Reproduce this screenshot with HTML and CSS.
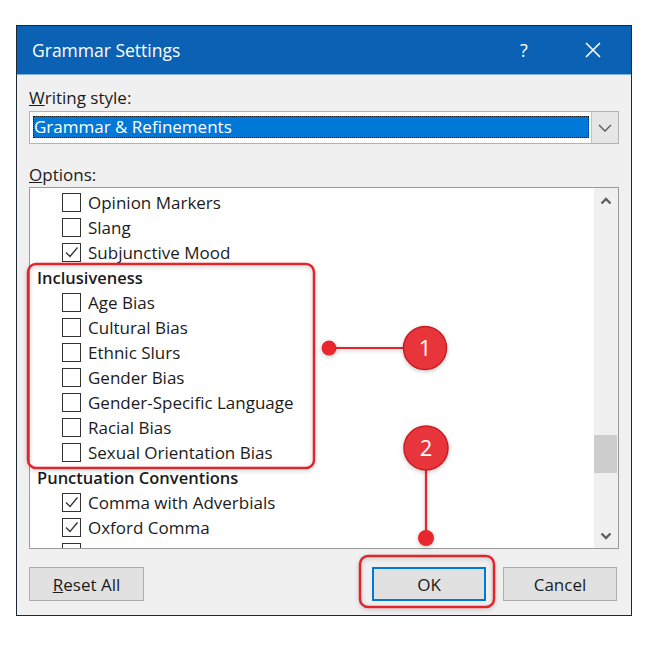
FILE: index.html
```html
<!DOCTYPE html>
<html>
<head>
<meta charset="utf-8">
<link rel="stylesheet" href="styles.css">
</head>
<body>
<div class="dialog">
  <div class="titlebar">
    <span class="title">Grammar Settings</span>
    <span class="help">?</span>
    <span class="close"><svg width="18" height="18" viewBox="0 0 18 18"><path d="M2 2 L16 16 M16 2 L2 16" stroke="#fff" stroke-width="1.6" fill="none"/></svg></span>
  </div>
  <div class="content">
    <div class="label"><u>W</u>riting style:</div>
    <div class="combo">
      <div class="combo-field"><span class="combo-sel">Grammar &amp; Refinements</span></div>
      <div class="combo-btn"><svg width="14" height="8" viewBox="0 0 14 8"><path d="M1 1 L7 7 L13 1" stroke="#5a5a5a" stroke-width="1.4" fill="none"/></svg></div>
    </div>
    <div class="label options-label"><u>O</u>ptions:</div>
    <div class="listbox">
      <div class="items">
        <div class="row"><span class="cb"></span>Opinion Markers</div>
        <div class="row"><span class="cb"></span>Slang</div>
        <div class="row"><span class="cb checked"><svg viewBox="0 0 17 17"><path d="M3 8.5 L7 12.5 L14.5 3.5" stroke="#333" stroke-width="1.3" fill="none"/></svg></span>Subjunctive Mood</div>
        <div class="row head">Inclusiveness</div>
        <div class="row"><span class="cb"></span>Age Bias</div>
        <div class="row"><span class="cb"></span>Cultural Bias</div>
        <div class="row"><span class="cb"></span>Ethnic Slurs</div>
        <div class="row"><span class="cb"></span>Gender Bias</div>
        <div class="row"><span class="cb"></span>Gender-Specific Language</div>
        <div class="row"><span class="cb"></span>Racial Bias</div>
        <div class="row"><span class="cb"></span>Sexual Orientation Bias</div>
        <div class="row head">Punctuation Conventions</div>
        <div class="row"><span class="cb checked"><svg viewBox="0 0 17 17"><path d="M3 8.5 L7 12.5 L14.5 3.5" stroke="#333" stroke-width="1.3" fill="none"/></svg></span>Comma with Adverbials</div>
        <div class="row"><span class="cb checked"><svg viewBox="0 0 17 17"><path d="M3 8.5 L7 12.5 L14.5 3.5" stroke="#333" stroke-width="1.3" fill="none"/></svg></span>Oxford Comma</div>
        <div class="row"><span class="cb"></span></div>
      </div>
      <div class="scrollbar">
        <div class="sb-arrow"><svg width="12" height="8" viewBox="0 0 12 8"><path d="M1.5 6.5 L6 2 L10.5 6.5" stroke="#606060" stroke-width="2.4" fill="none"/></svg></div>
        <div class="sb-track"><div class="sb-thumb"></div></div>
        <div class="sb-arrow"><svg width="12" height="8" viewBox="0 0 12 8"><path d="M1.5 1.5 L6 6 L10.5 1.5" stroke="#606060" stroke-width="2.4" fill="none"/></svg></div>
      </div>
    </div>
    <div class="buttons">
      <div class="btn"><u>R</u>eset All</div>
      <div class="spacer"></div>
      <div class="btn btn-default">OK</div>
      <div class="btn">Cancel</div>
    </div>
  </div>
</div>
<svg class="annotations" width="656" height="658" viewBox="0 0 656 658">
  <defs>
    <filter id="sh" x="-20%" y="-20%" width="140%" height="140%">
      <feDropShadow dx="0" dy="1.5" stdDeviation="2" flood-color="#000" flood-opacity="0.22"/>
    </filter>
  </defs>
  <g filter="url(#sh)" fill="none" stroke="#e0262c" stroke-width="2.5">
    <rect x="28" y="264" width="286" height="204" rx="8"/>
    <rect x="360" y="556" width="134" height="51" rx="8"/>
    <line x1="329" y1="348" x2="404" y2="348" stroke-width="2.2"/>
    <line x1="426" y1="468" x2="426" y2="538" stroke-width="2.2"/>
  </g>
  <g filter="url(#sh)">
    <circle cx="329" cy="348" r="7.5" fill="#e8262d"/>
    <circle cx="426" cy="538" r="8" fill="#e8262d"/>
    <circle cx="425" cy="348" r="21.5" fill="#e8353b" stroke="#c81e24" stroke-width="1.5"/>
    <circle cx="426" cy="448" r="22" fill="#e8353b" stroke="#c81e24" stroke-width="1.5"/>
  </g>
  <text x="425" y="356" class="num">1</text>
  <text x="426" y="456" class="num">2</text>
</svg>
</body>
</html>
```

FILE: styles.css
```css
html, body {
  margin: 0;
  padding: 0;
  background: #ffffff;
}
body {
  width: 656px;
  height: 658px;
  position: relative;
  font-family: "Open Sans", "Noto Sans", sans-serif;
  color: #1b1b1b;
}
.dialog {
  margin: 25px 0 0 16px;
  width: 616px;
  box-sizing: border-box;
  border: 1px solid #1d2730;
  background: #f0f0f0;
}
.titlebar {
  height: 49px;
  background: #0b62b4;
  display: flex;
  align-items: center;
  color: #ffffff;
  border-bottom: 1px solid #7fb0e0;
  box-sizing: border-box;
}
.title {
  font-size: 17.5px;
  padding-left: 15px;
  flex: 1;
  padding-bottom: 1px;
}
.help {
  font-size: 18px;
  width: 20px;
  text-align: center;
  margin-right: 50px;
}
.close {
  display: flex;
  margin-right: 29px;
}
.content {
  padding: 12px 12px 14px 12px;
}
.label {
  font-size: 17px;
  line-height: 22px;
  padding-left: 0;
}
.options-label {
  margin-top: 20px;
}
.combo {
  margin-top: 2px;
  height: 33px;
  box-sizing: border-box;
  border: 1px solid #b4b4b4;
  background: #ffffff;
  display: flex;
}
.combo-field {
  flex: 1;
  padding: 4px 2px 5px 3px;
  display: flex;
}
.combo-sel {
  flex: 1;
  background: #0078d7;
  color: #ffffff;
  font-size: 17px;
  line-height: 19px;
  padding-left: 0;
  border: 1px dotted #1a1a1a;
}
.combo-btn {
  width: 26px;
  background: #e6e6e6;
  border-left: 1px solid #c4c4c4;
  display: flex;
  align-items: center;
  justify-content: center;
}
.listbox {
  margin-top: 1px;
  height: 362px;
  box-sizing: border-box;
  border: 1px solid #9a9a9a;
  background: #ffffff;
  display: flex;
  overflow: hidden;
}
.items {
  flex: 1;
  padding-top: 2px;
  overflow: hidden;
}
.row {
  height: 25px;
  line-height: 25px;
  font-size: 17px;
  display: flex;
  align-items: center;
  padding-left: 32px;
  white-space: nowrap;
}
.row.head {
  padding-left: 7px;
  font-weight: 600;
  font-size: 16.5px;
}
.cb {
  width: 19px;
  height: 19px;
  box-sizing: border-box;
  border: 1px solid #333333;
  background: #ffffff;
  margin-right: 7px;
  margin-top: -1px;
  flex: none;
  display: flex;
}
.cb svg {
  width: 17px;
  height: 17px;
}
.scrollbar {
  width: 24px;
  background: #f0f0f0;
  display: flex;
  flex-direction: column;
}
.sb-arrow {
  height: 25px;
  display: flex;
  align-items: center;
  justify-content: center;
}
.sb-track {
  flex: 1;
}
.sb-thumb {
  margin-top: 222px;
  height: 38px;
  margin-right: 1px;
  background: #cdcdcd;
}
.buttons {
  margin-top: 18px;
  display: flex;
  gap: 17px;
  padding-right: 2px;
}
.spacer {
  flex: 1;
}
.btn {
  width: 115px;
  height: 34px;
  box-sizing: border-box;
  border: 1px solid #adadad;
  background: #e1e1e1;
  font-size: 17px;
  display: flex;
  align-items: center;
  justify-content: center;
}
.btn-default {
  width: 114px;
  border: 2px solid #0078d7;
}
.btn:last-child {
  width: 114px;
}
.annotations {
  position: absolute;
  left: 0;
  top: 0;
}
.num {
  font-family: "Open Sans", "Noto Sans", sans-serif;
  font-size: 22px;
  fill: #ffffff;
  text-anchor: middle;
}
```
